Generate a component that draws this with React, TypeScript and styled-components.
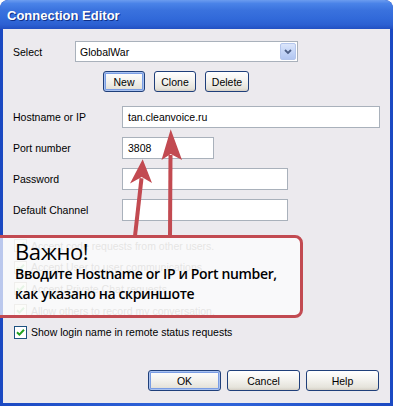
import React from "react";
import styled, { createGlobalStyle } from "styled-components";

const GlobalStyle = createGlobalStyle`
  html, body {
    margin: 0;
    padding: 0;
    background: #ffffff;
  }
  * {
    box-sizing: border-box;
  }
`;

const RED = "#C24A51";

const Window = styled.div`
  position: relative;
  width: 393px;
  height: 406px;
  display: flex;
  flex-direction: column;
  border-radius: 8px 8px 0 0;
  background: linear-gradient(to right, #1B49C2, #2E62D8 40%, #2E62D8 60%, #1B49C2);
  font-family: "Liberation Sans", Arial, sans-serif;
  font-size: 10.5px;
  color: #000;
  overflow: hidden;
`;

const TitleBar = styled.div`
  height: 29px;
  flex: none;
  display: flex;
  align-items: center;
  padding: 1px 0 0 7px;
  border-radius: 8px 8px 0 0;
  background: linear-gradient(
    to bottom,
    #6B9CEF 0%,
    #4A83E8 12%,
    #3A72DE 35%,
    #3169D9 65%,
    #2C60D2 85%,
    #2250C2 100%
  );
  color: #fff;
  font-weight: bold;
  font-size: 13px;
  text-shadow: 1px 1px 0 #0F2F86;
`;

const Body = styled.div`
  flex: 1;
  display: flex;
  flex-direction: column;
  margin: 0 3px 3px 3px;
  padding: 12px 11px 12px 10px;
  background: #ECEAEE;
`;

const SelectRow = styled.div`
  display: flex;
  align-items: center;
  height: 21px;
`;

const Label = styled.span<{ $width: number }>`
  width: ${(p) => p.$width}px;
  flex: none;
`;

const Combo = styled.div`
  width: 223px;
  height: 21px;
  display: flex;
  align-items: center;
  background: #fff;
  border: 1px solid #A9B1BB;
  padding: 1px 1px 1px 4px;
`;

const ComboText = styled.span`
  flex: 1;
`;

const ComboButton = styled.span`
  width: 16px;
  height: 17px;
  display: flex;
  align-items: center;
  justify-content: center;
  border: 1px solid #B4C6EC;
  border-radius: 2px;
  background: linear-gradient(to bottom, #DCE6FB, #C0D2F6 60%, #B2C6F1);
`;

const ActionRow = styled.div`
  display: flex;
  gap: 9px;
  margin-top: 9px;
  padding-left: 90px;
`;

const Button = styled.button<{ $width: number; $default?: boolean }>`
  width: ${(p) => p.$width}px;
  height: 21px;
  padding: 0;
  font-family: inherit;
  font-size: 10.5px;
  color: #000;
  border: 1px solid #1F3F7A;
  border-radius: 3px;
  background: linear-gradient(to bottom, #FFFFFF 0%, #F4F3EF 45%, #E6E4DC 85%, #D6D2C8 100%);
  box-shadow: ${(p) =>
    p.$default
      ? "inset 0 0 0 1px #A9C2F0, inset 0 0 0 2px #7A9DE3"
      : "inset 0 -1px 0 #D8D3C9"};
`;

const Fields = styled.div`
  display: grid;
  grid-template-columns: 109px 1fr;
  grid-auto-rows: 22px;
  row-gap: 9px;
  align-items: center;
  margin-top: 14px;
`;

const TextBox = styled.div<{ $width: number }>`
  width: ${(p) => p.$width}px;
  height: 22px;
  display: flex;
  align-items: center;
  padding-left: 5px;
  background: #fff;
  border: 1px solid #A9B1BB;
`;

const Checks = styled.div`
  display: flex;
  flex-direction: column;
  margin-top: 14px;
`;

const CheckRow = styled.div<{ $disabled?: boolean }>`
  height: 21.6px;
  display: flex;
  align-items: center;
  gap: 4px;
  padding-left: 1px;
  color: ${(p) => (p.$disabled ? "#A7A6A2" : "#000")};
`;

const Box = styled.span<{ $disabled?: boolean }>`
  width: 13px;
  height: 13px;
  flex: none;
  display: flex;
  align-items: center;
  justify-content: center;
  background: ${(p) => (p.$disabled ? "#F4F3EF" : "#fff")};
  border: 1px solid ${(p) => (p.$disabled ? "#C9C7BE" : "#1C5180")};
`;

const Footer = styled.div`
  display: flex;
  justify-content: flex-end;
  gap: 6px;
  margin-top: auto;
`;

const Callout = styled.div`
  position: absolute;
  left: -10px;
  top: 235px;
  width: 313px;
  height: 83px;
  border: 3px solid ${RED};
  border-radius: 8px;
  background: rgba(255, 255, 255, 0.7);
  padding: 0 0 0 22px;
  font-family: "Open Sans", "Noto Sans", sans-serif;
  color: #000;
`;

const CalloutTitle = styled.div`
  font-size: 22px;
  line-height: 26px;
  letter-spacing: -0.4px;
`;

const CalloutText = styled.div`
  font-size: 14px;
  font-weight: 600;
  line-height: 20px;
  letter-spacing: -0.35px;
`;

const Arrows = styled.svg`
  position: absolute;
  left: 0;
  top: 0;
  pointer-events: none;
`;

const Check = ({ disabled }: { disabled?: boolean }) => (
  <svg width="9" height="9" viewBox="0 0 9 9">
    <path
      d="M1 4.2 L3.4 6.6 L8 1.8"
      fill="none"
      stroke={disabled ? "#A9D9A9" : "#21A121"}
      strokeWidth="2"
    />
  </svg>
);

const checks = [
  { text: "Accept code requests from other users.", disabled: true },
  { text: "Accept User to user communications", disabled: true },
  { text: "Accept Private Chat requests", disabled: true },
  { text: "Allow others to record my conversation.", disabled: true },
  { text: "Show login name in remote status requests", disabled: false },
];

const fields = [
  { label: "Hostname or IP", value: "tan.cleanvoice.ru", width: 258 },
  { label: "Port number", value: "3808", width: 92 },
  { label: "Password", value: "", width: 166 },
  { label: "Default Channel", value: "", width: 166 },
];

export default function App() {
  return (
    <>
      <GlobalStyle />
      <Window>
        <TitleBar>Connection Editor</TitleBar>
        <Body>
          <SelectRow>
            <Label $width={62}>Select</Label>
            <Combo>
              <ComboText>GlobalWar</ComboText>
              <ComboButton>
                <svg width="8" height="6" viewBox="0 0 8 6">
                  <path d="M1 1 L4 4 L7 1" fill="none" stroke="#4D5F86" strokeWidth="1.8" />
                </svg>
              </ComboButton>
            </Combo>
          </SelectRow>

          <ActionRow>
            <Button $width={42} $default>New</Button>
            <Button $width={42}>Clone</Button>
            <Button $width={44}>Delete</Button>
          </ActionRow>

          <Fields>
            {fields.map((f) => (
              <React.Fragment key={f.label}>
                <span>{f.label}</span>
                <TextBox $width={f.width}>{f.value}</TextBox>
              </React.Fragment>
            ))}
          </Fields>

          <Checks>
            {checks.map((c) => (
              <CheckRow key={c.text} $disabled={c.disabled}>
                <Box $disabled={c.disabled}>
                  <Check disabled={c.disabled} />
                </Box>
                {c.text}
              </CheckRow>
            ))}
          </Checks>

          <Footer>
            <Button $width={73} $default>OK</Button>
            <Button $width={73}>Cancel</Button>
            <Button $width={73}>Help</Button>
          </Footer>
        </Body>

        <Arrows width="393" height="406" viewBox="0 0 393 406">
          <g fill={RED} stroke="none">
            <path d="M133 236 L139.5 178 L143.5 178.5 L137 236 Z" />
            <path d="M142.7 159.3 L152 183 L141.7 177 L130 183.5 Z" />
            <path d="M168 236 L168.5 155 L172.5 155 L172 236 Z" />
            <path d="M170.7 129.3 L182 160 L170.7 154 L161.5 160 Z" />
          </g>
        </Arrows>

        <Callout>
          <CalloutTitle>Важно!</CalloutTitle>
          <CalloutText>Вводите Hostname or IP и Port number,</CalloutText>
          <CalloutText>как указано на скриншоте</CalloutText>
        </Callout>
      </Window>
    </>
  );
}
